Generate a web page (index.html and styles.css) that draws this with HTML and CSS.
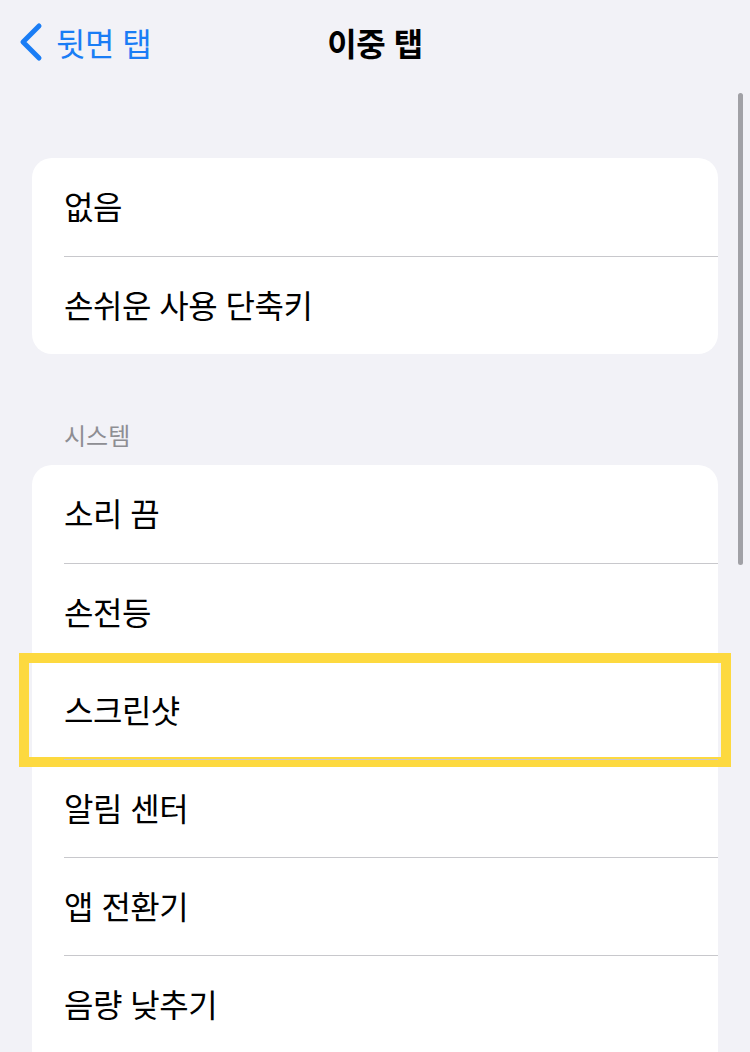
FILE: index.html
```html
<!DOCTYPE html>
<html lang="ko">
<head>
    <meta charset="UTF-8">
    <meta name="viewport" content="width=device-width, initial-scale=1.0">
    <title>이중 탭</title>
    <link rel="stylesheet" href="styles.css">
</head>
<body>
    <div class="navbar">
        <a class="back" href="#">
            <svg class="chevron" width="26" height="40" viewBox="0 0 26 40">
                <path d="M21 4 L5 20 L21 36" fill="none" stroke="#1a7df5" stroke-width="5" stroke-linecap="round" stroke-linejoin="round"/>
            </svg>
            <span>뒷면 탭</span>
        </a>
        <h1>이중 탭</h1>
        <div></div>
    </div>

    <div class="content">
        <div class="group">
            <div class="row"><div class="label">없음</div></div>
            <div class="row"><div class="label">손쉬운 사용 단축키</div></div>
        </div>

        <div class="section-title">시스템</div>

        <div class="group open">
            <div class="row"><div class="label">소리 끔</div></div>
            <div class="row"><div class="label">손전등</div></div>
            <div class="row selected"><div class="label">스크린샷</div></div>
            <div class="row"><div class="label">알림 센터</div></div>
            <div class="row"><div class="label">앱 전환기</div></div>
            <div class="row"><div class="label">음량 낮추기</div></div>
        </div>
    </div>

    <div class="scrollbar"></div>
</body>
</html>
```

FILE: styles.css
```css
html, body {
    overflow: hidden;
}

body {
    margin: 0;
    height: 1052px;
    background-color: #f2f2f7;
    font-family: 'Noto Sans CJK KR', sans-serif;
    color: #000;
}

.navbar {
    display: grid;
    grid-template-columns: 1fr auto 1fr;
    align-items: center;
    height: 84px;
    padding: 0 18px;
}

.back {
    display: flex;
    align-items: center;
    gap: 12px;
    color: #1a7df5;
    text-decoration: none;
    font-size: 32px;
    letter-spacing: -0.5px;
}

.chevron {
    flex-shrink: 0;
}

h1 {
    margin: 0;
    font-size: 32px;
    font-weight: 700;
    letter-spacing: -0.5px;
}

.content {
    padding: 74px 32px 0;
}

.group {
    background-color: white;
    border-radius: 20px;
}

/* the list keeps going below the screen */
.group.open {
    padding-bottom: 30px;
}

.section-title {
    margin: 66px 0 15px;
    padding-left: 32px;
    font-size: 24px;
    line-height: 30px;
    color: #8e8e93;
}

.row {
    position: relative;
    padding-left: 32px;
}

.label {
    box-sizing: border-box;
    height: 98px;
    padding-bottom: 4px;
    display: flex;
    align-items: center;
    border-top: 1px solid #c8c8cc;
    font-size: 32px;
    letter-spacing: -0.5px;
}

.row:first-child .label {
    border-top: none;
}

.row.selected::after {
    content: '';
    position: absolute;
    top: -8px;
    bottom: -8px;
    left: -13px;
    right: -13px;
    border: 10px solid #fdd93f;
}

.scrollbar {
    position: absolute;
    top: 93px;
    left: 738px;
    width: 5px;
    height: 472px;
    border-radius: 3px;
    background-color: #a1a1a6;
}
```
